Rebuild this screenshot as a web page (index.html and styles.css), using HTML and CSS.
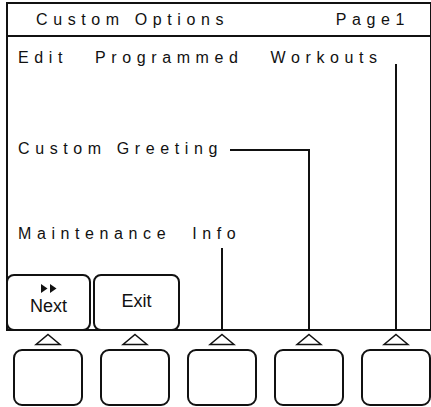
FILE: index.html
```html
<!DOCTYPE html>
<html lang="en">
<head>
  <meta charset="UTF-8">
  <title>Custom Options</title>
  <link rel="stylesheet" href="styles.css">
</head>
<body>
  <div class="device">
    <div class="screen">
      <div class="screen-header">
        <span>Custom Options</span>
        <span>Page1</span>
      </div>
      <div class="screen-body">
        <div class="menu-item item-edit">Edit Programmed Workouts</div>
        <div class="menu-item item-greeting">Custom Greeting</div>
        <div class="menu-item item-maint">Maintenance Info</div>

        <!-- connector lines from menu items down to the soft keys -->
        <span class="wire wire-workouts"></span>
        <span class="wire wire-greeting-h"></span>
        <span class="wire wire-greeting-v"></span>
        <span class="wire wire-info"></span>

        <div class="soft-labels">
          <div class="soft-label soft-next">
            <svg class="next-arrows" width="18" height="9" viewBox="0 0 18 9">
              <polygon points="1,0 7.5,4.5 1,9" fill="#111"/>
              <polygon points="10,0 16.5,4.5 10,9" fill="#111"/>
            </svg>
            <span>Next</span>
          </div>
          <div class="soft-label soft-exit"><span>Exit</span></div>
        </div>
      </div>
    </div>

    <div class="keys">
      <div class="key"><svg class="key-tri" width="28" height="13" viewBox="0 0 28 13"><polygon points="14,1.5 26,11.5 2,11.5" fill="#fff" stroke="#111" stroke-width="1.6"/></svg><div class="key-box"></div></div>
      <div class="key"><svg class="key-tri" width="28" height="13" viewBox="0 0 28 13"><polygon points="14,1.5 26,11.5 2,11.5" fill="#fff" stroke="#111" stroke-width="1.6"/></svg><div class="key-box"></div></div>
      <div class="key"><svg class="key-tri" width="28" height="13" viewBox="0 0 28 13"><polygon points="14,1.5 26,11.5 2,11.5" fill="#fff" stroke="#111" stroke-width="1.6"/></svg><div class="key-box"></div></div>
      <div class="key"><svg class="key-tri" width="28" height="13" viewBox="0 0 28 13"><polygon points="14,1.5 26,11.5 2,11.5" fill="#fff" stroke="#111" stroke-width="1.6"/></svg><div class="key-box"></div></div>
      <div class="key"><svg class="key-tri" width="28" height="13" viewBox="0 0 28 13"><polygon points="14,1.5 26,11.5 2,11.5" fill="#fff" stroke="#111" stroke-width="1.6"/></svg><div class="key-box"></div></div>
    </div>
  </div>
</body>
</html>
```

FILE: styles.css
```css
body {
  margin: 0;
  background: #fff;
  color: #111;
  font-family: "Liberation Sans", Arial, sans-serif;
  overflow: hidden;
}

.device {
  width: 431px;
  height: 407px;
  padding-top: 2px;
  box-sizing: border-box;
}

.screen {
  margin-left: 6px;
  width: 426px;
  height: 329px;
  box-sizing: border-box;
  border: 2px solid #111;
  display: flex;
  flex-direction: column;
}

.screen-header {
  height: 31px;
  flex-shrink: 0;
  border-bottom: 2px solid #111;
  display: flex;
  justify-content: space-between;
  align-items: center;
  padding: 1px 20px 0 28px;
  box-sizing: border-box;
  height: 33px;
  font-size: 16px;
  letter-spacing: 5.6px;
}

.screen-body {
  flex: 1;
  position: relative;
  display: flex;
  flex-direction: column;
}

.menu-item {
  font-size: 16px;
  line-height: 18px;
  letter-spacing: 5.6px;
  padding-left: 10px;
}

.item-edit {
  margin-top: 12px;
  word-spacing: 17px;
}

.item-greeting {
  margin-top: 73px;
}

.item-maint {
  margin-top: 67px;
  word-spacing: 11px;
}

/* connector lines */
.wire {
  position: absolute;
  background: #111;
}

.wire-workouts {
  left: 387px;
  top: 27px;
  width: 2px;
  bottom: 0;
}

.wire-greeting-h {
  left: 222px;
  top: 112px;
  width: 80px;
  height: 2px;
}

.wire-greeting-v {
  left: 300px;
  top: 112px;
  width: 2px;
  bottom: 0;
}

.wire-info {
  left: 213px;
  top: 211px;
  width: 2px;
  bottom: 0;
}

.soft-labels {
  margin-top: auto;
  display: flex;
  gap: 2px;
  margin-left: -2px;
  margin-bottom: -2px;
}

.soft-label {
  width: 85px;
  height: 57px;
  box-sizing: border-box;
  border: 2.5px solid #111;
  border-radius: 8px;
  background: #fff;
  display: flex;
  flex-direction: column;
  align-items: center;
  justify-content: center;
  font-size: 18px;
  line-height: 19px;
}

.soft-next {
  justify-content: flex-start;
}

.next-arrows {
  margin-top: 8px;
  margin-bottom: 4px;
}

.soft-exit {
  width: 87px;
  border-width: 2px;
  padding-bottom: 2px;
}

.keys {
  display: flex;
  gap: 17px;
  padding-left: 13px;
}

.key {
  width: 70px;
  display: flex;
  flex-direction: column;
  align-items: center;
  flex-shrink: 0;
}

.key-tri {
  display: block;
  margin-top: 2px;
}

.key-box {
  width: 70px;
  height: 57px;
  margin-top: 3px;
  box-sizing: border-box;
  border: 2px solid #111;
  border-radius: 9px;
}
```
